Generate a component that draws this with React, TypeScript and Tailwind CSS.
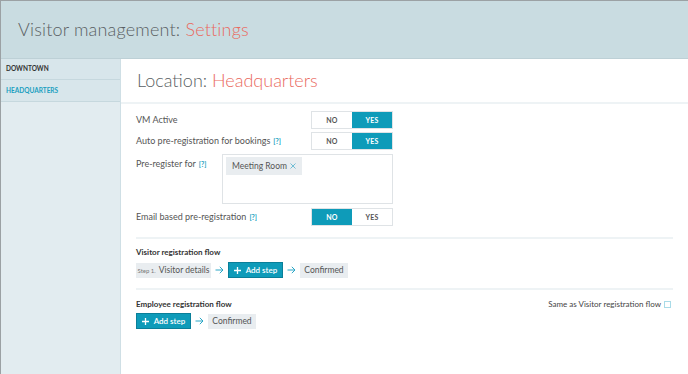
import React from "react";

const teal = "bg-[#0e9bb9]";

function Toggle({ value }: { value: "no" | "yes" }) {
  const cell = "flex h-full w-[40px] items-center justify-center text-[7px] font-bold uppercase tracking-[0.04em]";
  return (
    <div className="flex h-[18px] border border-[#dfe3e6] bg-white">
      <div className={value === "no" ? `${cell} ${teal} text-white` : `${cell} text-[#555]`}>No</div>
      <div className={value === "yes" ? `${cell} ${teal} text-white` : `${cell} text-[#555]`}>Yes</div>
    </div>
  );
}

function Help() {
  return <span className="ml-[3px] text-[7px] font-bold text-[#1a9fc0]">[?]</span>;
}

function Arrow() {
  return (
    <svg width="9" height="8" viewBox="0 0 9 8" fill="none" aria-hidden>
      <path d="M0.5 4 H8 M4.8 0.8 L8 4 L4.8 7.2" stroke="#2aa6c6" strokeWidth="1" />
    </svg>
  );
}

function AddStep() {
  return (
    <div className={`flex h-[16px] w-[55px] items-center justify-center gap-[5px] border border-[#0a7f99] ${teal} text-[8px] font-semibold text-white`}>
      <svg width="7" height="7" viewBox="0 0 7 7" aria-hidden>
        <path d="M3.5 0 V7 M0 3.5 H7" stroke="white" strokeWidth="1.3" />
      </svg>
      Add step
    </div>
  );
}

function Chip({ children, w }: { children: React.ReactNode; w: string }) {
  return (
    <div className={`flex h-[15px] ${w} items-center justify-center bg-[#e9edf0] text-[8.5px] text-[#555]`}>
      {children}
    </div>
  );
}

export default function App() {
  return (
    <div className="flex h-[374px] w-[688px] flex-col overflow-hidden border-l border-t border-[#9ba1a4] bg-white font-['Lato',sans-serif] text-[#555]">
      <header className="flex h-[58px] shrink-0 items-center border-b border-[#bdd0d6] bg-[#c9dce1] pb-[1px] pl-[17px] text-[18px] font-light tracking-[0.01em] text-[#5a5f63]">
        Visitor management:&nbsp;<span className="text-[#ea6a60]">Settings</span>
      </header>

      <div className="flex flex-1">
        <aside className="w-[120px] shrink-0 border-r border-[#cfdfe5] bg-[#e2ecf0]">
          <div className="flex h-[21px] items-center border-b border-[#c6d8de] bg-[#d8e6eb] pl-[5px] text-[6.5px] font-bold text-[#333]">
            DOWNTOWN
          </div>
          <div className="flex h-[22px] items-center border-b border-[#c6d8de] bg-[#d8e6eb] pl-[5px] text-[6.5px] font-bold text-[#1a9fc0]">
            HEADQUARTERS
          </div>
        </aside>

        <main className="flex-1">
          <div className="flex h-[45px] items-center border-b-2 border-[#eef3f5] pl-[16px] text-[18px] font-light text-[#5a5f63]">
            Location:&nbsp;<span className="text-[#ea6a60]">Headquarters</span>
          </div>

          <div className="px-[15px] pt-[7px]">
            <div className="flex w-[257px] flex-col gap-[3px] text-[9px]">
              <div className="flex items-center justify-between">
                <span>VM Active</span>
                <Toggle value="yes" />
              </div>
              <div className="flex items-center justify-between">
                <span>
                  Auto pre-registration for bookings<Help />
                </span>
                <Toggle value="yes" />
              </div>
              <div className="flex justify-between pt-[1px]">
                <span className="pt-[3px]">
                  Pre-register for<Help />
                </span>
                <div className="h-[50px] w-[171px] border border-[#dfe3e6] p-[3px] pt-[2px]">
                  <div className="flex h-[18px] w-[76px] items-center justify-between bg-[#e9edf0] px-[6px] text-[8.5px]">
                    Meeting Room
                    <svg width="6" height="6" viewBox="0 0 6 6" aria-hidden>
                      <path d="M0.5 0.5 L5.5 5.5 M5.5 0.5 L0.5 5.5" stroke="#62b8d0" strokeWidth="0.9" />
                    </svg>
                  </div>
                </div>
              </div>
              <div className="flex items-center justify-between pt-[1px]">
                <span>
                  Email based pre-registration<Help />
                </span>
                <Toggle value="no" />
              </div>
            </div>

            <div className="mt-[11px] h-[2px] bg-[#eef3f5]" />

            <div className="pt-[7px] text-[8px] font-bold text-[#333]">Visitor registration flow</div>
            <div className="mt-[4px] flex items-center gap-[4px]">
              <Chip w="w-[75px]">
                <span className="mr-[3px] text-[6px] text-[#777]">Step 1.</span>Visitor details
              </Chip>
              <Arrow />
              <AddStep />
              <Arrow />
              <Chip w="w-[48px]">Confirmed</Chip>
            </div>

            <div className="mt-[10px] h-[2px] bg-[#eef3f5]" />

            <div className="flex items-center justify-between pt-[8px]">
              <span className="text-[8px] font-bold text-[#333]">Employee registration flow</span>
              <span className="mr-[2px] flex items-center gap-[3px] text-[8px] text-[#444]">
                Same as Visitor registration flow
                <span className="h-[7px] w-[7px] border border-[#a9dbe8] bg-white" />
              </span>
            </div>
            <div className="mt-[3px] flex items-center gap-[4px]">
              <AddStep />
              <Arrow />
              <Chip w="w-[48px]">Confirmed</Chip>
            </div>
          </div>
        </main>
      </div>
    </div>
  );
}
